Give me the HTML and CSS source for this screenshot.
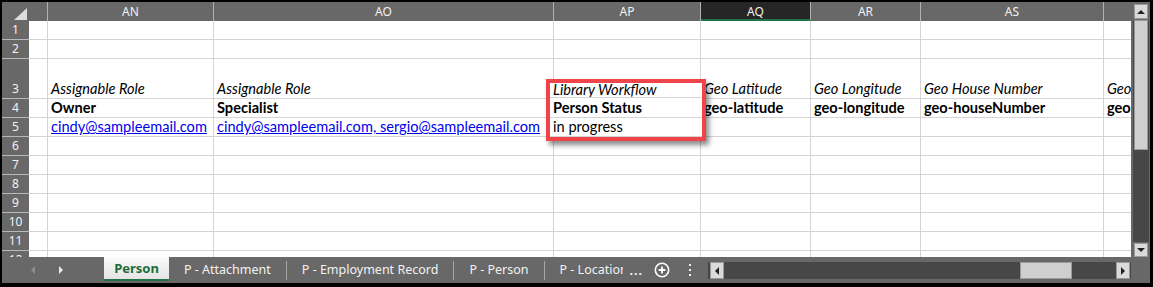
FILE: index.html
```html
<!DOCTYPE html>
<html>
<head>
  <title>Person - Sheet</title>
  <link rel="stylesheet" href="styles.css">
</head>
<body>
  <div class="frame">
    <div class="main">
      <div class="sheet">
        <div class="grid">
          <!-- column headers -->
          <div class="ch corner"><span class="tri"></span></div>
          <div class="ch"></div>
          <div class="ch">AN</div>
          <div class="ch">AO</div>
          <div class="ch">AP</div>
          <div class="ch active">AQ</div>
          <div class="ch">AR</div>
          <div class="ch">AS</div>
          <div class="ch"></div>

          <div class="rh">1</div>
          <div class="c"></div><div class="c"></div><div class="c"></div><div class="c"></div>
          <div class="c"></div><div class="c"></div><div class="c"></div><div class="c"></div>

          <div class="rh">2</div>
          <div class="c"></div><div class="c"></div><div class="c"></div><div class="c"></div>
          <div class="c"></div><div class="c"></div><div class="c"></div><div class="c"></div>

          <!-- AP3:AP5 are shown in the callout below -->
          <div class="rh">3</div>
          <div class="c"></div>
          <div class="c it">Assignable Role</div>
          <div class="c it">Assignable Role</div>
          <div class="c"></div>
          <div class="c it">Geo Latitude</div>
          <div class="c it">Geo Longitude</div>
          <div class="c it">Geo House Number</div>
          <div class="c it">Geo Street</div>

          <div class="rh">4</div>
          <div class="c"></div>
          <div class="c b">Owner</div>
          <div class="c b">Specialist</div>
          <div class="c"></div>
          <div class="c b">geo-latitude</div>
          <div class="c b">geo-longitude</div>
          <div class="c b">geo-houseNumber</div>
          <div class="c b">geo-street</div>

          <div class="rh">5</div>
          <div class="c"></div>
          <div class="c"><a href="#">cindy@sampleemail.com</a></div>
          <div class="c"><a href="#">cindy@sampleemail.com, sergio@sampleemail.com</a></div>
          <div class="c"></div>
          <div class="c"></div><div class="c"></div><div class="c"></div><div class="c"></div>

          <div class="rh">6</div>
          <div class="c"></div><div class="c"></div><div class="c"></div><div class="c"></div>
          <div class="c"></div><div class="c"></div><div class="c"></div><div class="c"></div>

          <div class="rh">7</div>
          <div class="c"></div><div class="c"></div><div class="c"></div><div class="c"></div>
          <div class="c"></div><div class="c"></div><div class="c"></div><div class="c"></div>

          <div class="rh">8</div>
          <div class="c"></div><div class="c"></div><div class="c"></div><div class="c"></div>
          <div class="c"></div><div class="c"></div><div class="c"></div><div class="c"></div>

          <div class="rh">9</div>
          <div class="c"></div><div class="c"></div><div class="c"></div><div class="c"></div>
          <div class="c"></div><div class="c"></div><div class="c"></div><div class="c"></div>

          <div class="rh">10</div>
          <div class="c"></div><div class="c"></div><div class="c"></div><div class="c"></div>
          <div class="c"></div><div class="c"></div><div class="c"></div><div class="c"></div>

          <div class="rh">11</div>
          <div class="c"></div><div class="c"></div><div class="c"></div><div class="c"></div>
          <div class="c"></div><div class="c"></div><div class="c"></div><div class="c"></div>

          <div class="rh">12</div>
          <div class="c"></div><div class="c"></div><div class="c"></div><div class="c"></div>
          <div class="c"></div><div class="c"></div><div class="c"></div><div class="c"></div>
        </div>

        <!-- highlighted cells -->
        <div class="callout">
          <div class="co-row first it">Library Workflow</div>
          <div class="co-row b">Person Status</div>
          <div class="co-row last">in progress</div>
        </div>
      </div>

      <div class="vscroll">
        <div class="sbtn up"><span class="arr-up"></span></div>
        <div class="vtrack"><div class="vthumb"></div></div>
        <div class="sbtn down"><span class="arr-down"></span></div>
      </div>
    </div>

    <div class="tabbar">
      <div class="nav">
        <span class="arr-left dim"></span>
        <span class="arr-right"></span>
      </div>
      <div class="tabs">
        <div class="tab active">Person</div>
        <div class="tab">P - Attachment</div>
        <span class="sep"></span>
        <div class="tab">P - Employment Record</div>
        <span class="sep"></span>
        <div class="tab">P - Person</div>
        <span class="sep"></span>
        <div class="tab clip">P - Location</div>
        <div class="more">...</div>
        <svg class="add" width="16" height="16" viewBox="0 0 16 16">
          <circle cx="8" cy="8" r="6.7" fill="none" stroke="#fff" stroke-width="1.6"/>
          <path d="M8 4.6v6.8M4.6 8h6.8" stroke="#fff" stroke-width="1.8"/>
        </svg>
        <svg class="dots" width="4" height="14" viewBox="0 0 4 14">
          <rect x="1" y="1" width="2" height="2" fill="#eee"/>
          <rect x="1" y="6" width="2" height="2" fill="#eee"/>
          <rect x="1" y="11" width="2" height="2" fill="#eee"/>
        </svg>
      </div>
      <div class="hscroll">
        <div class="sbtn left"><span class="arr-left dark"></span></div>
        <div class="htrack"><div class="hthumb"></div></div>
        <div class="sbtn right"><span class="arr-right dark"></span></div>
      </div>
    </div>
  </div>
</body>
</html>
```
FILE: styles.css
```css
body {
  margin: 0;
  width: 1153px;
  height: 287px;
  overflow: hidden;
  background: #000;
  font-family: Lato, "Liberation Sans", sans-serif;
}

.frame {
  margin: 2px 3px 4px 2px;
  width: 1148px;
  height: 281px;
  background: #686868;
  display: flex;
  flex-direction: column;
}

.main {
  display: flex;
  height: 255px;
}

.sheet {
  position: relative;
  width: 1129px;
  height: 255px;
  overflow: hidden;
  background: #fff;
}

.grid {
  display: grid;
  grid-template-columns: 27px 19px 166px 340px 147px 110px 110px 183px 40px;
  grid-template-rows: 19px 19px 19px 40px repeat(9, 19px);
}

/* column headers */
.ch {
  background: #686868;
  color: #f2f2f2;
  font-family: "Noto Sans", sans-serif;
  font-size: 12px;
  display: flex;
  align-items: center;
  justify-content: center;
  border-right: 1px solid #b2b2b2;
  box-sizing: border-box;
}

.ch.active {
  background: #262626;
  border-bottom: 2px solid #217346;
  padding-top: 2px;
}

.corner {
  position: relative;
  border-right: none;
}

.corner .tri {
  position: absolute;
  right: 2px;
  bottom: 1px;
  width: 0;
  height: 0;
  border-left: 13px solid transparent;
  border-bottom: 12px solid #dcdcdc;
}

/* row headers */
.rh {
  background: #686868;
  color: #f2f2f2;
  font-family: "Noto Sans", sans-serif;
  font-size: 12px;
  line-height: 14px;
  display: flex;
  align-items: flex-end;
  justify-content: center;
  padding-bottom: 2px;
  border-bottom: 1px solid #b8b8b8;
  box-sizing: border-box;
}

/* cells */
.c {
  border-right: 1px solid #d4d4d4;
  border-bottom: 1px solid #d4d4d4;
  box-sizing: border-box;
  font-size: 14.6px;
  line-height: 17px;
  padding: 0 0 1px 3px;
  display: flex;
  align-items: flex-end;
  white-space: nowrap;
  overflow: hidden;
  color: #000;
}

.it {
  font-style: italic;
}

.b {
  font-weight: bold;
}

.c a {
  color: #0000f0;
  text-decoration: underline;
}

/* red highlight around the status cells */
.callout {
  position: absolute;
  left: 544px;
  top: 77px;
  width: 160px;
  height: 62px;
  box-sizing: border-box;
  border: 4px solid #ef444a;
  background: #fff;
  box-shadow: 3px 4px 5px rgba(0, 0, 0, 0.45);
}

.co-row {
  height: 20px;
  box-sizing: border-box;
  border-bottom: 1px solid #d4d4d4;
  font-size: 14.6px;
  line-height: 17px;
  padding: 0 0 1px 3px;
  display: flex;
  align-items: flex-end;
  white-space: nowrap;
  overflow: hidden;
}

.co-row.first {
  height: 15px;
  line-height: 14px;
  padding-bottom: 0;
}

.co-row.last {
  height: 19px;
}

/* scroll bars */
.vscroll {
  width: 19px;
  box-sizing: border-box;
  padding: 2px 1px 0 2px;
  display: flex;
  flex-direction: column;
}

.sbtn {
  background: #dadada;
  border: 1px solid #9a9a9a;
  box-sizing: border-box;
  display: flex;
  align-items: center;
  justify-content: center;
}

.sbtn.up {
  height: 15px;
  margin: 0 1px;
}

.sbtn.down {
  height: 14px;
  margin: 1px 1px 0;
}

.vtrack {
  flex: 1;
  background: #474747;
  margin-top: 1px;
}

.vthumb {
  height: 130px;
  margin: 0 1px;
  background: #cfcfcf;
  border: 1px solid #9a9a9a;
  box-sizing: border-box;
}

.arr-up {
  border-left: 4px solid transparent;
  border-right: 4px solid transparent;
  border-bottom: 4px solid #222;
}

.arr-down {
  border-left: 4px solid transparent;
  border-right: 4px solid transparent;
  border-top: 4px solid #222;
}

.arr-left {
  border-top: 4px solid transparent;
  border-bottom: 4px solid transparent;
  border-right: 4px solid #ededed;
}

.arr-right {
  border-top: 4px solid transparent;
  border-bottom: 4px solid transparent;
  border-left: 4px solid #ededed;
}

.arr-left.dim {
  border-right-color: #8e8e8e;
}

.arr-left.dark {
  border-right-color: #222;
}

.arr-right.dark {
  border-left-color: #222;
}

/* sheet tabs */
.tabbar {
  display: flex;
  height: 26px;
  font-family: "Noto Sans", sans-serif;
  font-size: 12.5px;
  color: #f2f2f2;
}

.nav {
  width: 102px;
  box-sizing: border-box;
  padding-left: 29px;
  display: flex;
  align-items: center;
  gap: 24px;
}

.tabs {
  flex: 1;
  display: flex;
  align-items: center;
}

.tab {
  height: 24px;
  padding: 0 15px;
  display: flex;
  align-items: center;
  white-space: nowrap;
  align-self: flex-start;
}

.tab.active {
  width: 65px;
  box-sizing: border-box;
  justify-content: center;
  padding: 0;
  background: linear-gradient(#fbfbfb, #e4e4e4);
  border-bottom: 2px solid #217346;
  color: #1d6b3b;
  font-weight: bold;
  font-size: 13px;
}

.tab.clip {
  width: 78px;
  box-sizing: border-box;
  overflow: hidden;
  padding-right: 0;
}

.sep {
  width: 1px;
  height: 19px;
  background: #a8a8a8;
}

.more {
  margin-left: 7px;
  font-weight: bold;
  letter-spacing: 1px;
}

.add {
  margin-left: 11px;
}

.dots {
  margin-left: 18px;
}

.hscroll {
  width: 423px;
  margin: 5px 19px 4px 0;
  display: flex;
  background: #474747;
}

.sbtn.left,
.sbtn.right {
  width: 14px;
}

.sbtn.left {
  margin-left: 2px;
}

.sbtn.right {
  margin-right: 1px;
}

.htrack {
  flex: 1;
  position: relative;
}

.hthumb {
  position: absolute;
  left: 296px;
  top: 0;
  bottom: 0;
  width: 52px;
  background: #cfcfcf;
  border: 1px solid #9a9a9a;
  box-sizing: border-box;
}
```
